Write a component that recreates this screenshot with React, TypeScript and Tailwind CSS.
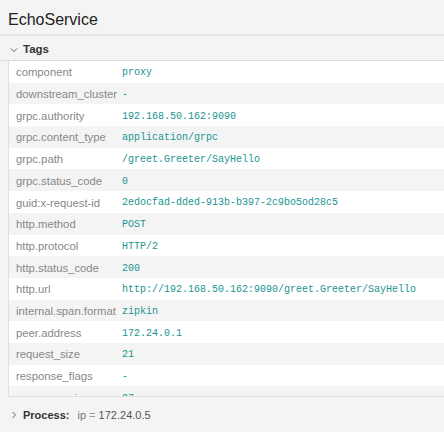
import React from 'react';

interface Tag {
  key: string;
  value: string;
}

const tags: Tag[] = [
  { key: 'component', value: 'proxy' },
  { key: 'downstream_cluster', value: '-' },
  { key: 'grpc.authority', value: '192.168.50.162:9090' },
  { key: 'grpc.content_type', value: 'application/grpc' },
  { key: 'grpc.path', value: '/greet.Greeter/SayHello' },
  { key: 'grpc.status_code', value: '0' },
  { key: 'guid:x-request-id', value: '2edocfad-dded-913b-b397-2c9bo5od28c5' },
  { key: 'http.method', value: 'POST' },
  { key: 'http.protocol', value: 'HTTP/2' },
  { key: 'http.status_code', value: '200' },
  { key: 'http.url', value: 'http://192.168.50.162:9090/greet.Greeter/SayHello' },
  { key: 'internal.span.format', value: 'zipkin' },
  { key: 'peer.address', value: '172.24.0.1' },
  { key: 'request_size', value: '21' },
  { key: 'response_flags', value: '-' },
  { key: 'response_size', value: '27' },
];

function Chevron({ down }: { down?: boolean }) {
  return (
    <svg width="8" height="8" viewBox="0 0 8 8" className="shrink-0">
      {down ? (
        <path d="M1 2.5 L4 5.5 L7 2.5" fill="none" stroke="#666" strokeWidth="1" />
      ) : (
        <path d="M2.5 1 L5.5 4 L2.5 7" fill="none" stroke="#666" strokeWidth="1" />
      )}
    </svg>
  );
}

export default function App() {
  return (
    <div className="w-[444px] h-[432px] bg-[#f4f4f4] overflow-hidden font-['Liberation_Sans',Arial,sans-serif]">
      <div className="h-[36px] border-b-2 border-[#e6e6e6] pl-[8px] pt-[11px] text-[16px] leading-[18px] text-[#222]">
        EchoService
      </div>
      <div className="h-[25px] border-b border-[#dcdcdc] flex items-center gap-[5px] pl-[10px] pt-[3px]">
        <Chevron down />
        <span className="text-[11.5px] font-bold text-[#333]">Tags</span>
      </div>
      <div className="ml-[8px] h-[336px] overflow-hidden border-l border-b border-[#e0e0e0]">
        {tags.map((t, i) => (
          <div
            key={t.key}
            className={`flex items-center h-[21.7px] pt-[2px] ${i % 2 === 0 ? 'bg-white' : 'bg-[#f4f4f4]'}`}
          >
            <div className="w-[113px] shrink-0 pl-[7px] text-[11.3px] text-[#888] whitespace-pre">
              {t.key}
            </div>
            <div className="text-[10px] text-[#1a9490] font-['Courier_New','Liberation_Mono',monospace] whitespace-pre">
              {t.value}
            </div>
          </div>
        ))}
      </div>
      <div className="flex items-center gap-[5px] pl-[10px] pt-[10px]">
        <Chevron />
        <span className="text-[11px] font-bold text-[#333]">Process:</span>
        <span className="text-[11px] text-[#777] ml-[3px]">
          ip <span className="text-[#999]">=</span> <span className="text-[#555]">172.24.0.5</span>
        </span>
      </div>
    </div>
  );
}
